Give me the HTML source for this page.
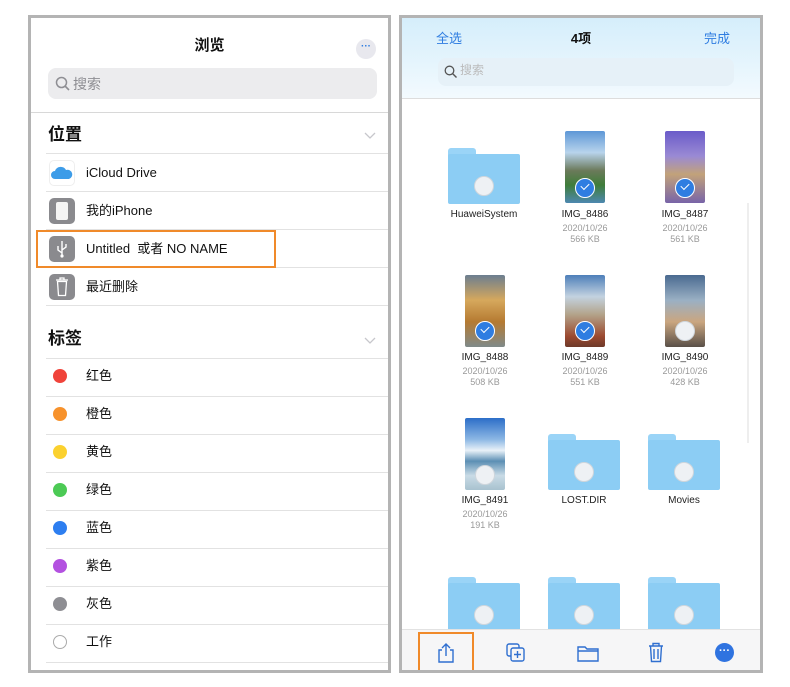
<!DOCTYPE html>
<html><head><meta charset="utf-8"><style>
*{margin:0;padding:0;box-sizing:border-box}
body{width:790px;height:687px;background:#fff;position:relative;overflow:hidden;font-family:"Liberation Sans","Noto Sans CJK SC",sans-serif;color:#111;line-height:1.15}
.a{position:absolute}
.panel{position:absolute;border:3px solid #b4b4b4;background:#fff;overflow:hidden}
.sep{position:absolute;height:1px;background:#e2e2e2}
.row{position:absolute;left:55px;font-size:13px;line-height:14px}
.dot{position:absolute;width:14px;height:14px;border-radius:50%}
.ic{position:absolute;left:18px;width:26px;height:26px;border-radius:5px;background:#8a8a8e}
.lbl{position:absolute;width:100px;text-align:center;font-size:10px;color:#222}
.sub{position:absolute;width:100px;text-align:center;font-size:9px;color:#999;line-height:11px}
.thumb{position:absolute;width:40px;height:72px;border-radius:2px}
.chk{position:absolute;width:20px;height:20px;border-radius:50%;background:#2f7de1;border:1.5px solid #fff}
.chk:after{content:"";position:absolute;left:5px;top:4px;width:7px;height:4px;border-left:1.6px solid #fff;border-bottom:1.6px solid #fff;transform:rotate(-45deg)}
.unc{position:absolute;width:20px;height:20px;border-radius:50%;background:#eef1f4;border:1px solid #cfd6dc}
.fold{position:absolute;width:72px;height:56px}
.fold .t{position:absolute;left:0;top:0;width:28px;height:10px;background:#9ad4f7;border-radius:3px 3px 0 0}
.fold .b{position:absolute;left:0;top:6px;width:72px;height:50px;background:#8ccdf4;border-radius:2px}
.fold .unc{left:26px;top:28px}
.hd{position:absolute;left:17px;font-size:17px;font-weight:bold;line-height:18px}
</style></head><body>

<div class="panel" style="left:28px;top:15px;width:363px;height:658px">
  <div class="a" style="left:0;top:20px;width:357px;text-align:center;font-size:15px;font-weight:bold;line-height:16px">浏览</div>
  <div class="a" style="left:325px;top:21px;width:20px;height:20px;border-radius:50%;background:#e8e8ee;color:#2f7de1;font-size:10px;text-align:center;line-height:16px;font-weight:bold">···</div>
  <div class="a" style="left:17px;top:50px;width:329px;height:31px;background:#ececee;border-radius:8px"></div>
  <svg class="a" style="left:24px;top:58px" width="16" height="16"><circle cx="6.5" cy="6.5" r="5" fill="none" stroke="#8e8e93" stroke-width="1.5"/><line x1="10" y1="10" x2="14" y2="14" stroke="#8e8e93" stroke-width="1.6"/></svg>
  <div class="a" style="left:42px;top:58px;font-size:14px;color:#8e8e93;line-height:16px">搜索</div>
  <div class="sep" style="left:0;top:94px;width:357px;background:#d8d8d8"></div>
  <div class="hd" style="top:108px">位置</div>
  <svg class="a" style="left:333px;top:114px" width="12" height="8"><path d="M1 1l5 5 5-5" fill="none" stroke="#c7c7cc" stroke-width="1.3"/></svg>
  <div class="sep" style="left:15px;top:135px;width:342px"></div>
  <div class="sep" style="left:15px;top:173px;width:342px"></div>
  <div class="sep" style="left:15px;top:211px;width:342px"></div>
  <div class="sep" style="left:15px;top:249px;width:342px"></div>
  <div class="sep" style="left:15px;top:287px;width:342px"></div>
  <div class="a" style="left:18px;top:142px;width:26px;height:26px;border-radius:5px;background:#fff;border:1px solid #eee"></div>
  <svg class="a" style="left:20px;top:148px" width="22" height="14"><path d="M4 13a4 4 0 0 1 0-8 6 6 0 0 1 11-1 4.5 4.5 0 0 1 3 9z" fill="#3d9ce8"/></svg>
  <div class="row" style="top:148px">iCloud Drive</div>
  <div class="ic" style="top:180px"></div>
  <div class="a" style="left:25px;top:184px;width:12px;height:18px;background:#f4f4f4;border-radius:2px"></div>
  <div class="row" style="top:186px">我的iPhone</div>
  <div class="ic" style="top:218px"></div>
  <svg class="a" style="left:22px;top:221px" width="18" height="20"><path d="M9 2v16M9 14l-4-3V7M9 11l4-3V5" fill="none" stroke="#fff" stroke-width="1.4"/><circle cx="9" cy="17" r="1.6" fill="#fff"/></svg>
  <div class="row" style="top:224px">Untitled &nbsp;或者 NO NAME</div>
  <div class="ic" style="top:256px"></div>
  <svg class="a" style="left:24px;top:259px" width="14" height="20"><path d="M1 3h12M5 3V1h4v2M2.5 4.5l1 14h7l1-14z" fill="none" stroke="#fff" stroke-width="1.3"/></svg>
  <div class="row" style="top:262px">最近删除</div>
  <div class="a" style="left:5px;top:212px;width:240px;height:38px;border:2px solid #f08a2a"></div>

  <div class="hd" style="top:312px">标签</div>
  <svg class="a" style="left:333px;top:319px" width="12" height="8"><path d="M1 1l5 5 5-5" fill="none" stroke="#c7c7cc" stroke-width="1.3"/></svg>
  <div class="sep" style="left:15px;top:340px;width:342px"></div>
  <div class="sep" style="left:15px;top:378px;width:342px"></div>
  <div class="sep" style="left:15px;top:416px;width:342px"></div>
  <div class="sep" style="left:15px;top:454px;width:342px"></div>
  <div class="sep" style="left:15px;top:492px;width:342px"></div>
  <div class="sep" style="left:15px;top:530px;width:342px"></div>
  <div class="sep" style="left:15px;top:568px;width:342px"></div>
  <div class="sep" style="left:15px;top:606px;width:342px"></div>
  <div class="sep" style="left:15px;top:644px;width:342px"></div>
  <div class="dot" style="left:22px;top:351px;background:#f0433a"></div><div class="row" style="top:351px">红色</div>
  <div class="dot" style="left:22px;top:389px;background:#f7922c"></div><div class="row" style="top:389px">橙色</div>
  <div class="dot" style="left:22px;top:427px;background:#fbd12f"></div><div class="row" style="top:427px">黄色</div>
  <div class="dot" style="left:22px;top:465px;background:#4cca55"></div><div class="row" style="top:465px">绿色</div>
  <div class="dot" style="left:22px;top:503px;background:#2d7ef0"></div><div class="row" style="top:503px">蓝色</div>
  <div class="dot" style="left:22px;top:541px;background:#b351e0"></div><div class="row" style="top:541px">紫色</div>
  <div class="dot" style="left:22px;top:579px;background:#8e8e93"></div><div class="row" style="top:579px">灰色</div>
  <div class="dot" style="left:22px;top:617px;border:1px solid #aaa"></div><div class="row" style="top:617px">工作</div>
</div>

<div class="panel" style="left:399px;top:15px;width:364px;height:658px">
  <div class="a" style="left:0;top:0;width:358px;height:80px;background:linear-gradient(180deg,#d5eefb 0%,#e6f5fd 60%,#f3fafe 100%)"></div>
  <div class="a" style="left:34px;top:14px;font-size:13px;color:#2f7de1">全选</div>
  <div class="a" style="left:0;top:14px;width:358px;text-align:center;font-size:13px;font-weight:bold">4项</div>
  <div class="a" style="left:302px;top:14px;font-size:13px;color:#2f7de1">完成</div>
  <div class="a" style="left:36px;top:40px;width:296px;height:28px;background:#e6f1f8;border-radius:8px"></div>
  <svg class="a" style="left:42px;top:47px" width="14" height="14"><circle cx="5.5" cy="5.5" r="4.3" fill="none" stroke="#555" stroke-width="1.3"/><line x1="8.5" y1="8.5" x2="12.5" y2="12.5" stroke="#555" stroke-width="1.4"/></svg>
  <div class="a" style="left:58px;top:46px;font-size:12px;color:#bbb">搜索</div>
  <div class="sep" style="left:0;top:80px;width:358px;background:#ddd"></div>
  <div class="a" style="left:345px;top:185px;width:2px;height:240px;background:#eee"></div>

  <div class="fold" style="left:46px;top:130px"><div class="t"></div><div class="b"></div><div class="unc"></div></div>
  <div class="lbl" style="left:32px;top:191px">HuaweiSystem</div>
  <div class="thumb" style="left:163px;top:113px;background:linear-gradient(180deg,#5d97d6 0%,#b8d4ec 30%,#6b7a5a 55%,#3f7d3a 75%,#4d88b0 100%)"></div>
  <div class="chk" style="left:173px;top:160px"></div>
  <div class="lbl" style="left:133px;top:191px">IMG_8486</div>
  <div class="sub" style="left:133px;top:205px">2020/10/26<br>566 KB</div>
  <div class="thumb" style="left:263px;top:113px;background:linear-gradient(180deg,#6a5bc9 0%,#9a8ad4 35%,#c2a27a 60%,#7864a8 100%)"></div>
  <div class="chk" style="left:273px;top:160px"></div>
  <div class="lbl" style="left:233px;top:191px">IMG_8487</div>
  <div class="sub" style="left:233px;top:205px">2020/10/26<br>561 KB</div>

  <div class="thumb" style="left:63px;top:257px;background:linear-gradient(180deg,#6c7e90 0%,#d6a85c 35%,#b57a32 65%,#7f8a8a 100%)"></div>
  <div class="chk" style="left:73px;top:303px"></div>
  <div class="lbl" style="left:33px;top:334px">IMG_8488</div>
  <div class="sub" style="left:33px;top:348px">2020/10/26<br>508 KB</div>
  <div class="thumb" style="left:163px;top:257px;background:linear-gradient(180deg,#4d7fb9 0%,#c3d2e0 30%,#b3a38a 55%,#9c4a30 85%,#6e3a2a 100%)"></div>
  <div class="chk" style="left:173px;top:303px"></div>
  <div class="lbl" style="left:133px;top:334px">IMG_8489</div>
  <div class="sub" style="left:133px;top:348px">2020/10/26<br>551 KB</div>
  <div class="thumb" style="left:263px;top:257px;background:linear-gradient(180deg,#4a6a90 0%,#9ab0c4 35%,#caa680 65%,#5a5048 100%)"></div>
  <div class="unc" style="left:273px;top:303px"></div>
  <div class="lbl" style="left:233px;top:334px">IMG_8490</div>
  <div class="sub" style="left:233px;top:348px">2020/10/26<br>428 KB</div>

  <div class="thumb" style="left:63px;top:400px;background:linear-gradient(180deg,#2c6ec8 0%,#8db8e4 30%,#e9f1f8 45%,#5c8fb4 60%,#c9dbe6 80%,#a8c2cf 100%)"></div>
  <div class="unc" style="left:73px;top:447px"></div>
  <div class="lbl" style="left:33px;top:477px">IMG_8491</div>
  <div class="sub" style="left:33px;top:491px">2020/10/26<br>191 KB</div>
  <div class="fold" style="left:146px;top:416px"><div class="t"></div><div class="b"></div><div class="unc"></div></div>
  <div class="lbl" style="left:132px;top:477px">LOST.DIR</div>
  <div class="fold" style="left:246px;top:416px"><div class="t"></div><div class="b"></div><div class="unc"></div></div>
  <div class="lbl" style="left:232px;top:477px">Movies</div>

  <div class="fold" style="left:46px;top:559px"><div class="t"></div><div class="b"></div><div class="unc"></div></div>
  <div class="fold" style="left:146px;top:559px"><div class="t"></div><div class="b"></div><div class="unc"></div></div>
  <div class="fold" style="left:246px;top:559px"><div class="t"></div><div class="b"></div><div class="unc"></div></div>

  <div class="a" style="left:0;top:611px;width:358px;height:44px;background:#f6f6f7;border-top:1px solid #e2e2e2"></div>
  <svg class="a" style="left:35px;top:624px" width="18" height="22"><path d="M5 8H2v12h14V8h-3M9 14V2M5 6l4-4 4 4" fill="none" stroke="#2f6fd0" stroke-width="1.4"/></svg>
  <div class="a" style="left:16px;top:614px;width:56px;height:40px;border:2px solid #f08a2a"></div>
  <svg class="a" style="left:104px;top:625px" width="20" height="20"><rect x="1" y="1" width="12" height="12" rx="2" fill="none" stroke="#2f6fd0" stroke-width="1.4"/><rect x="5" y="5" width="13" height="13" rx="2" fill="#f6f6f7" stroke="#2f6fd0" stroke-width="1.4"/><path d="M11.5 8v7M8 11.5h7" stroke="#2f6fd0" stroke-width="1.4"/></svg>
  <svg class="a" style="left:175px;top:627px" width="22" height="17"><path d="M1 2h7l2 2h11v12H1z M1 6h20" fill="none" stroke="#2f6fd0" stroke-width="1.4"/></svg>
  <svg class="a" style="left:246px;top:624px" width="16" height="21"><path d="M1 4h14M5 4V1.5h6V4M2.5 4l1 15.5h9l1-15.5M6 7v10M10 7v10" fill="none" stroke="#2f6fd0" stroke-width="1.4"/></svg>
  <div class="a" style="left:313px;top:625px;width:19px;height:19px;border-radius:50%;background:#2f73e0;color:#fff;font-size:11px;text-align:center;line-height:16px;font-weight:bold">···</div>
</div>
</body></html>
